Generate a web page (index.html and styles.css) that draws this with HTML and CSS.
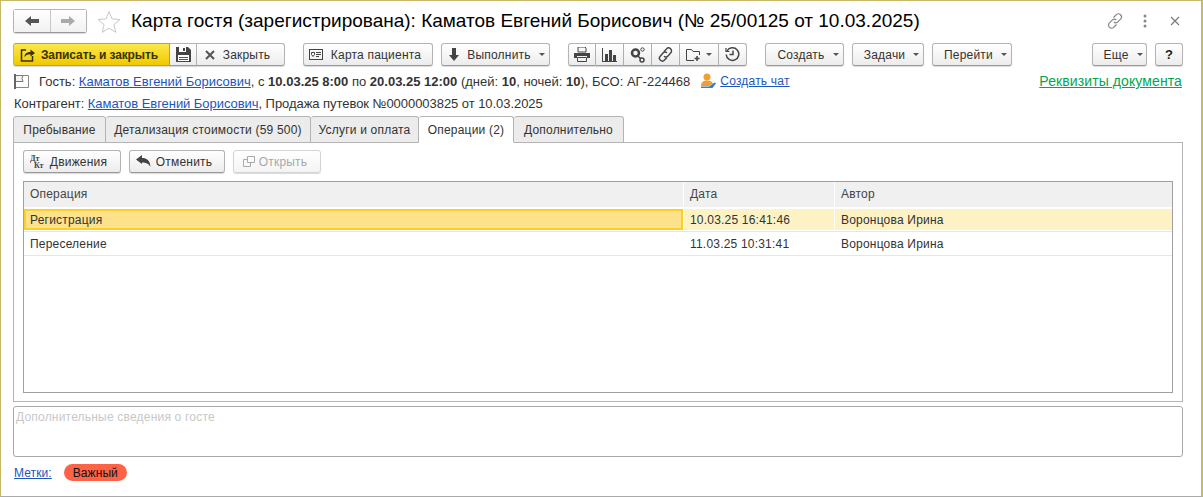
FILE: index.html
```html
<!DOCTYPE html>
<html lang="ru">
	<head>
		<meta charset="utf-8">
		<title>Карта гостя</title>
		<link rel="stylesheet" href="styles.css">
	</head>
	<body>
		<div class="window">
			<div class="head">
				<div class="nav-group">
					<button class="nav-btn">
						<svg width="16" height="12" viewBox="0 0 16 12"><path d="M1 6 7 1v3h8v4H7v3z" fill="#555"/></svg>
					</button>
					<button class="nav-btn">
						<svg width="16" height="12" viewBox="0 0 16 12"><path d="M15 6 9 1v3H1v4h8v3z" fill="#aaa"/></svg>
					</button>
				</div>
				<svg class="star" width="24" height="23" viewBox="0 0 24 23"><path d="M12 1.500l3 7.400 8 .6-6.100 5.100 1.900 7.800L12 18.200 5.200 22.400l1.900-7.800L1 9.500l8-.6z" fill="#fff" stroke="#c8c8c8"/></svg>
				<h1 class="title">Карта гостя (зарегистрирована): Каматов Евгений Борисович (№ 25/00125 от 10.03.2025)</h1>
				<div class="head-actions">
					<svg class="act-link" width="18" height="18" viewBox="0 0 18 18" fill="none" stroke="#888" stroke-width="1.200"><path d="M7.500 5.500 10 3a3 3 0 0 1 4.800 3.800l-3 3a3 3 0 0 1-4 .2"/><path d="M10.500 12.500 8 15a3 3 0 0 1-4.800-3.800l3-3a3 3 0 0 1 4-.2"/></svg>
					<svg class="act-dots" width="4" height="14" viewBox="0 0 4 14" fill="#888"><circle cx="2" cy="2" r="1.500"/><circle cx="2" cy="7" r="1.500"/><circle cx="2" cy="12" r="1.500"/></svg>
					<svg width="10" height="10" viewBox="0 0 10 10" stroke="#777" stroke-width="1.100"><path d="M1 1l8 8M9 1 1 9"/></svg>
				</div>
			</div>

			<div class="toolbar">
				<div class="btn-group">
					<button class="btn btn-primary w-save">
						<svg width="16" height="14" viewBox="0 0 16 14" fill="none" stroke="#3a3200" stroke-width="1.500"><path d="M6 2H1.500v11h11V8"/><path d="M4.500 9c0-3.500 2.500-5 6-5V1.500L15 5l-4.500 3.500V6.300C8 6.300 6 7 4.500 9z" fill="#3a3200" stroke="none"/></svg>
						Записать и закрыть
					</button>
					<button class="btn icon-btn w-disk">
						<svg width="15" height="15" viewBox="0 0 15 15"><path d="M0 0h12l3 3v12H0z" fill="#444"/><path d="M3 0h7v5H3z" fill="#fff"/><path d="M7 1h2v3H7z" fill="#444"/><path d="M2 8h11v6H2z" fill="#fff"/><path d="M3 10h9v1H3zM3 12h9v1H3z" fill="#555"/></svg>
					</button>
					<button class="btn w-close">
						<svg width="10" height="10" viewBox="0 0 10 10" stroke="#555" stroke-width="2"><path d="M1 1l8 8M9 1 1 9"/></svg>
						Закрыть
					</button>
				</div>
				<button class="btn w-card">
					<svg width="14" height="11" viewBox="0 0 14 11" fill="none"><rect x=".5" y=".5" width="13" height="10" stroke="#444"/><path d="M2.500 3.500h3v2l-1.500 2-1.500-2zM7 3.500h5M7 5.500h5M7 7.500h3" stroke="#444"/></svg>
					Карта пациента
				</button>
				<button class="btn w-run">
					<svg width="10" height="13" viewBox="0 0 10 13"><path d="M3 0h4v7h3l-5 6-5-6h3z" fill="#444"/></svg>
					Выполнить <span class="caret"></span>
				</button>
				<div class="btn-group">
					<button class="btn icon-btn w-icon">
						<svg width="16" height="15" viewBox="0 0 16 15"><path d="M4 0h7l1 1v4H4z" fill="none" stroke="#444"/><path d="M0 6h16v5h-3V9H3v2H0z" fill="#444"/><path d="M3.500 10.500h9v4h-9z" fill="none" stroke="#444"/></svg>
					</button>
					<button class="btn icon-btn w-icon">
						<svg width="15" height="14" viewBox="0 0 15 14"><path d="M0 0h1v13h14v1H0zM3 6h3v7H3zM7 2h3v11H7zM11 7h3v6h-3z" fill="#444"/></svg>
					</button>
					<button class="btn icon-btn w-icon">
						<svg width="16" height="16" viewBox="0 0 16 16" fill="none" stroke="#444"><circle cx="5.500" cy="6" r="3.500" stroke-width="2.500"/><circle cx="12" cy="13" r="2" stroke-width="1.500"/><circle cx="12.500" cy="2.500" r="1.700"/><path d="M8 9l2.500 2.500" stroke-width="1.500"/></svg>
					</button>
					<button class="btn icon-btn w-icon">
						<svg width="15" height="15" viewBox="0 0 15 15" fill="none" stroke="#444" stroke-width="1.400"><path d="M6 4.500 8.500 2a2.800 2.800 0 0 1 4.300 3.800L10 9a2.800 2.800 0 0 1-4 .2"/><path d="M9 10.500 6.500 13a2.800 2.800 0 0 1-4.300-3.800L5 6a2.800 2.800 0 0 1 4-.2"/></svg>
					</button>
					<button class="btn icon-btn w-folder">
						<svg width="15" height="14" viewBox="0 0 15 14" fill="none" stroke="#444"><path d="M8 12.500H.5v-11h5l1.500 2h6.500V7"/><path d="M11 8v5M8.500 10.500h5" stroke-width="1.500"/></svg>
						<span class="caret"></span>
					</button>
					<button class="btn icon-btn w-icon">
						<svg width="15" height="15" viewBox="0 0 15 15" fill="none" stroke="#444" stroke-width="1.500"><path d="M2 4a6.300 6.300 0 1 1-.8 3.500"/><path d="M1 1v3.500h3.500" stroke-width="1.200"/><path d="M4.500 7.500h3.500V3.500"/></svg>
					</button>
				</div>
				<button class="btn btn-menu w-create">Создать <span class="caret"></span></button>
				<button class="btn btn-menu w-tasks">Задачи <span class="caret"></span></button>
				<button class="btn btn-menu w-goto">Перейти <span class="caret"></span></button>
				<button class="btn btn-menu w-more push-right">Еще <span class="caret"></span></button>
				<button class="btn w-help"><b>?</b></button>
			</div>

			<div class="info-row first">
				<svg class="flag" width="15" height="15" viewBox="0 0 15 15" fill="none" stroke="#777"><path d="M1 0v15" stroke="#666" stroke-width="2"/><path d="M2 1.500h12.500v12H2" stroke="#888"/><path d="M2 1.500h7l-1 3 1 3H2" stroke="#777" fill="#f4f4f4"/></svg>
				<span>Гость: <a href="#">Каматов Евгений Борисович</a>, с <b>10.03.25 8:00</b> по <b>20.03.25 12:00</b> (дней: <b>10</b>, ночей: <b>10</b>), БСО: АГ-224468</span>
				<svg class="chat-icon" width="17" height="16" viewBox="0 0 17 16"><circle cx="7" cy="4" r="3.500" fill="#f0a030"/><path d="M1 13c0-4 2.500-5.500 6-5.500s5 1 6 3L9 13z" fill="#f0a030"/><path d="M1 13.500h8l4-3 2-1 1 1-3.500 4.500H1z" fill="#3a80c8"/></svg>
				<a href="#" class="chat-link">Создать чат</a>
				<a href="#" class="green-link">Реквизиты документа</a>
			</div>
			<div class="info-row second">
				<span>Контрагент: <a href="#">Каматов Евгений Борисович</a>, Продажа путевок №0000003825 от 10.03.2025</span>
			</div>

			<div class="tabs">
				<div class="tab tab-stay">Пребывание</div>
				<div class="tab tab-cost">Детализация стоимости (59 500)</div>
				<div class="tab tab-serv">Услуги и оплата</div>
				<div class="tab tab-ops active">Операции (2)</div>
				<div class="tab tab-extra">Дополнительно</div>
			</div>
			<div class="pane">
				<div class="pane-bar">
					<button class="btn w-moves">
						<svg width="14" height="14" viewBox="0 0 14 14"><text x="0" y="6" class="mini-text">Дт</text><text x="4" y="13" class="mini-text">Кт</text></svg>
						Движения
					</button>
					<button class="btn w-undo">
						<svg width="15" height="13" viewBox="0 0 15 13"><path d="M0 4.500 6 0v3c5 0 8 2.500 8.500 9-2-3.500-4.500-4.500-8.500-4.500V9z" fill="#444"/></svg>
						Отменить
					</button>
					<button class="btn btn-disabled w-open">
						<svg width="12" height="11" viewBox="0 0 12 11" fill="none" stroke="#aaa"><path d="M4.500.5h7v6h-7zM4.500 3.500h-4v7h7v-4"/></svg>
						Открыть
					</button>
				</div>
				<div class="grid-table">
					<div class="grid-row grid-head">
						<div class="cell">Операция</div>
						<div class="cell">Дата</div>
						<div class="cell">Автор</div>
					</div>
					<div class="grid-row row-selected">
						<div class="cell cell-current">Регистрация</div>
						<div class="cell">10.03.25 16:41:46</div>
						<div class="cell">Воронцова Ирина</div>
					</div>
					<div class="grid-row">
						<div class="cell">Переселение</div>
						<div class="cell">11.03.25 10:31:41</div>
						<div class="cell">Воронцова Ирина</div>
					</div>
				</div>
			</div>

			<div class="notes">Дополнительные сведения о госте</div>

			<div class="labels">
				<a href="#">Метки:</a>
				<span class="badge">Важный</span>
			</div>
		</div>
	</body>
</html>
```

FILE: styles.css
```css
* {
	box-sizing: border-box;
}

body {
	margin: 0;
	background-color: #fff;
	font-family: "Liberation Sans", Arial, sans-serif;
	font-size: 12px;
	letter-spacing: 0.2px;
	color: #333;
}

a {
	color: #1c55c0;
}

.window {
	width: 1203px;
	height: 497px;
	border: 1px solid #c8b968;
	border-bottom-color: #aaa;
	border-width: 1px 2px 1px 1px;
	padding: 8px 18px 0 12px;
	overflow: hidden;
}

.head {
	display: flex;
	align-items: center;
	height: 24px;
}

.nav-group {
	display: flex;
	width: 74px;
	height: 24px;
	border: 1px solid #b4b4b4;
	border-bottom-color: #999;
	border-radius: 3px;
	box-shadow: 0 1px 1px rgba(0, 0, 0, 0.15);
}

.nav-btn {
	flex: 1;
	border: none;
	padding: 0;
	background: linear-gradient(#fff, #f1f1f1);
	display: flex;
	align-items: center;
	justify-content: center;
}

.nav-btn + .nav-btn {
	border-left: 1px solid #c8c8c8;
}

.star {
	margin-left: 10px;
	flex: none;
}

.title {
	margin: 0 0 0 10px;
	font-size: 19px;
	font-weight: normal;
	letter-spacing: 0;
	color: #000;
	white-space: nowrap;
}

.head-actions {
	margin-left: auto;
	display: flex;
	align-items: center;
	padding-right: 3px;
}

.act-link {
	margin-right: 19px;
}

.act-dots {
	margin-right: 23px;
}

.toolbar {
	display: flex;
	margin-top: 10px;
	height: 24px;
}

.btn-group {
	display: flex;
	margin-right: 18px;
}

.btn {
	height: 23px;
	padding: 0;
	display: flex;
	align-items: center;
	justify-content: center;
	gap: 8px;
	border: 1px solid #b4b4b4;
	border-bottom-color: #999;
	border-radius: 3px;
	background: linear-gradient(#fff, #ececec);
	box-shadow: 0 1px 1px rgba(0, 0, 0, 0.15);
	font-family: inherit;
	font-size: 12px;
	letter-spacing: inherit;
	color: #333;
	white-space: nowrap;
	margin-right: 8px;
}

.btn-group .btn {
	margin-right: 0;
	border-radius: 0;
	border-left: none;
}

.btn-group .btn:first-child {
	border-left: 1px solid #b4b4b4;
	border-radius: 3px 0 0 3px;
}

.btn-group .btn:last-child {
	border-radius: 0 3px 3px 0;
}

.btn-group .btn-primary {
	background: linear-gradient(#fce94c, #f0c800);
	border-color: #c9a800;
	color: #3a3200;
	font-weight: bold;
	letter-spacing: -0.1px;
	gap: 5px;
	padding-right: 5px;
}

.btn-group .w-close {
	gap: 8px;
	padding-right: 6px;
}

.btn-menu {
	padding-left: 7px;
}

.btn-disabled {
	color: #a8a8a8;
	border-color: #d4d4d4;
	background: linear-gradient(#fff, #f4f4f4);
}

.caret {
	width: 0;
	height: 0;
	border: 3px solid transparent;
	border-top: 3px solid #555;
	border-bottom: none;
}

.w-save { width: 157px; }
.w-disk { width: 27px; }
.w-close { width: 88px; }
.w-card { width: 130px; padding-right: 6px; }
.w-run { width: 109px; margin-right: 18px; padding-left: 3px; }
.w-icon { width: 28px; }
.w-folder { width: 39px; gap: 5px; }
.w-create { width: 79px; }
.w-tasks { width: 72px; }
.w-goto { width: 80px; }
.w-more { width: 55px; }
.w-help { width: 28px; margin-right: 0; font-size: 13px; color: #222; }
.push-right { margin-left: auto; }
.w-moves { width: 98px; gap: 6px; padding-right: 7px; }
.w-undo { width: 96px; gap: 5px; padding-right: 6px; }
.w-open { width: 88px; gap: 4px; padding-right: 4px; }

.info-row {
	display: flex;
	align-items: center;
	height: 16px;
	font-size: 13px;
	letter-spacing: 0;
	white-space: nowrap;
}

.info-row.first {
	margin-top: 6px;
}

.info-row.second {
	margin-top: 6px;
	padding-left: 1px;
	letter-spacing: -0.05px;
}

.flag {
	margin-right: 10px;
	margin-left: 1px;
}

.chat-icon {
	margin-left: 10px;
	margin-right: 3px;
}

.chat-link {
	font-size: 12px;
	letter-spacing: 0.2px;
}

.green-link {
	margin-left: auto;
	margin-right: 1px;
	font-size: 14px;
	letter-spacing: 0.1px;
	color: #00a651;
}

.tabs {
	display: flex;
	margin-top: 5px;
	height: 27px;
}

.tab {
	height: 27px;
	display: flex;
	align-items: center;
	justify-content: center;
	background-color: #ececec;
	border: 1px solid #b4b4b4;
	border-left: none;
	border-radius: 3px 3px 0 0;
	color: #333;
}

.tab:first-child {
	border-left: 1px solid #b4b4b4;
}

.tab.active {
	background-color: #fff;
	border-bottom-color: #fff;
	position: relative;
	z-index: 1;
}

.tab-stay { width: 93px; }
.tab-cost { width: 205px; }
.tab-serv { width: 108px; }
.tab-ops { width: 95px; }
.tab-extra { width: 110px; }

.pane {
	margin-top: -1px;
	height: 260px;
	border: 1px solid #b4b4b4;
	padding: 7px 9px 8px;
}

.pane-bar {
	display: flex;
	height: 31px;
}

.mini-text {
	font-family: "Liberation Serif", serif;
	font-size: 8px;
	font-weight: bold;
	letter-spacing: 0;
	fill: #444;
}

.grid-table {
	height: 212px;
	border: 1px solid #a0a0a0;
}

.grid-row {
	display: grid;
	grid-template-columns: 660px 151px 1fr;
	height: 24px;
	border-bottom: 1px solid #e6e6e6;
}

.grid-head {
	height: 27px;
	background-color: #f0f0f0;
	border-bottom: 2px solid #fff;
	color: #444;
}

.grid-head .cell {
	padding-bottom: 2px;
}

.cell {
	display: flex;
	align-items: center;
	padding-left: 6px;
	border-right: 1px solid #fff;
}

.grid-row .cell:last-child {
	border-right: none;
}

.row-selected {
	height: 23px;
	padding-bottom: 1px;
}

.row-selected .cell {
	background-color: #fdf2c4;
}

.row-selected .cell-current {
	background-color: #fde28c;
	border: 2px solid #fccf27;
	margin-right: 1px;
	padding-left: 4px;
}

.notes {
	margin-top: 4px;
	height: 51px;
	border: 1px solid #a8a8a8;
	border-radius: 3px;
	padding: 3px 2px;
	color: #c8c8c8;
}

.labels {
	display: flex;
	align-items: center;
	gap: 12px;
	margin-top: 7px;
	height: 17px;
	padding-left: 1px;
	letter-spacing: 0.1px;
}

.badge {
	width: 63px;
	height: 17px;
	border-radius: 9px;
	background-color: #ff6347;
	color: #111;
	display: flex;
	align-items: center;
	justify-content: center;
}
```
